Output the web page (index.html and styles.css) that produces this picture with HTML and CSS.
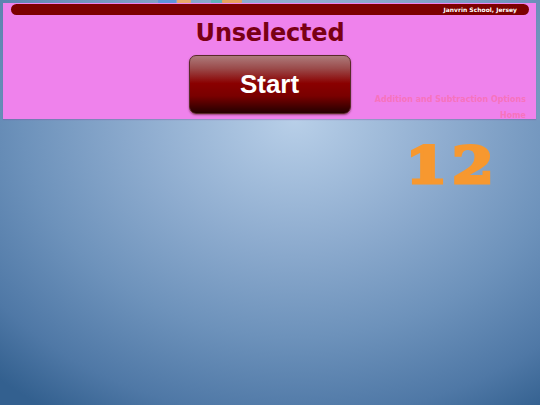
FILE: index.html
```html
<!DOCTYPE html>
<html>
<head>
<meta charset="utf-8">
<link rel="stylesheet" href="styles.css">
</head>
<body>
<div class="deco">
  <span class="blob b1"></span>
  <span class="blob b2"></span>
  <span class="blob b3"></span>
  <span class="blob b4"></span>
</div>
<div class="panel">
  <div class="bar"><span class="school">Janvrin School, Jersey</span></div>
  <h1 class="title">Unselected</h1>
  <div class="row">
    <div class="side"></div>
    <button class="start">Start</button>
    <div class="side links">
      <a class="link">Addition and Subtraction Options</a>
      <a class="link">Home</a>
    </div>
  </div>
</div>
<div class="score">12</div>
</body>
</html>
```
FILE: styles.css
```css
html, body {
  margin: 0;
  padding: 0;
  height: 100%;
}
body {
  width: 540px;
  height: 405px;
  overflow: hidden;
  position: relative;
  background: radial-gradient(ellipse 440px 350px at 295px 120px, #b8cfe8 0%, #8eaccf 35%, #6d92bb 62%, #4f78a6 85%, #33608f 100%);
  font-family: "DejaVu Sans", Verdana, sans-serif;
}
.deco {
  position: absolute;
  left: 0;
  top: 0;
  width: 540px;
  height: 6px;
  z-index: 0;
}
.blob {
  position: absolute;
  top: -2px;
  height: 7px;
  border-radius: 4px;
}
.b1 { left: 158px; width: 18px; background: #5d95dc; }
.b2 { left: 177px; width: 14px; background: #e9a86a; }
.b3 { left: 211px; width: 16px; background: #5fb3b8; }
.b4 { left: 222px; width: 20px; background: #e6a25e; }
.panel {
  position: relative;
  z-index: 1;
  margin: 3px 4px 0 3px;
  height: 116px;
  background: #ef82ec;
  padding: 1px 7px 0 8px;
  box-sizing: border-box;
  box-shadow: 0 1px 1px rgba(120, 80, 160, 0.35);
}
.bar {
  height: 11px;
  background: #7c0000;
  border-radius: 6px;
  display: flex;
  justify-content: flex-end;
  align-items: center;
  padding-right: 12px;
}
.school {
  color: #ffffff;
  font-weight: bold;
  font-size: 6px;
  line-height: 1;
}
.title {
  margin: 6px 0 0 0;
  text-align: center;
  font-size: 24px;
  line-height: 24px;
  font-weight: bold;
  color: #7a0014;
  letter-spacing: -0.2px;
}
.row {
  display: grid;
  grid-template-columns: 1fr 162px 1fr;
  margin-top: 10px;
  height: 59px;
  margin-left: -8px;
  margin-right: -7px;
}
.start {
  width: 162px;
  height: 59px;
  margin: 0;
  padding: 0;
  border: 1px solid #5a2a2a;
  border-radius: 7px;
  background: linear-gradient(to bottom, #ad7b7b 0%, #9a4a4a 22%, #8a0000 48%, #7a0000 70%, #3a0000 92%, #260000 100%);
  color: #ffffff;
  font-family: "Liberation Sans", Arial, sans-serif;
  font-weight: bold;
  font-size: 26px;
  box-shadow: 0 1px 2px rgba(60, 0, 0, 0.5);
}
.links {
  display: flex;
  flex-direction: column;
  align-items: flex-end;
  justify-content: flex-end;
  padding-right: 10px;
  gap: 6px;
  margin-bottom: -7px;
}
.link {
  color: #f773bd;
  font-weight: bold;
  font-size: 8px;
  line-height: 10px;
}
.score {
  margin-top: 22px;
  padding-right: 42px;
  text-align: right;
  font-family: "DejaVu Serif", "Liberation Serif", serif;
  font-weight: bold;
  font-size: 50px;
  line-height: 50px;
  letter-spacing: 4px;
  color: #f7982f;
  -webkit-text-stroke: 3px #f7982f;
  transform: scaleX(1.2);
  transform-origin: 495px 0;
}
```
